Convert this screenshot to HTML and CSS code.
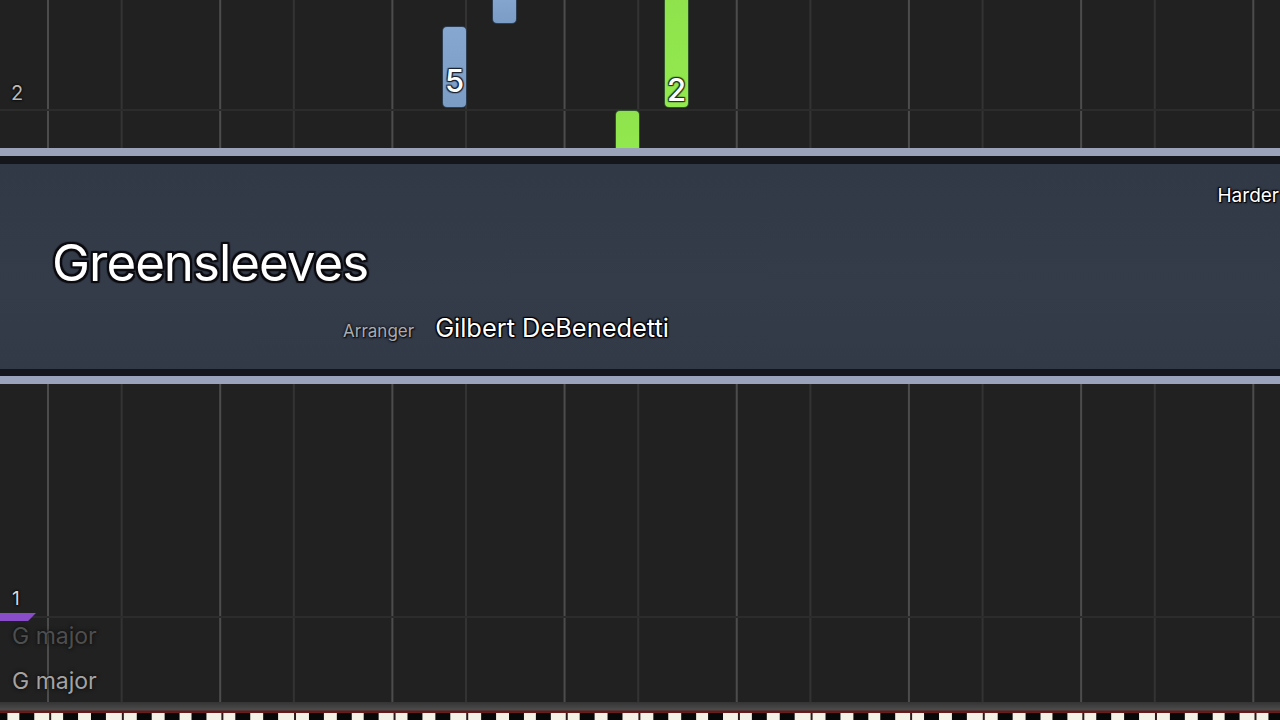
FILE: index.html
```html
<!DOCTYPE html>
<html lang="en">
<head>
<meta charset="utf-8">
<title>Greensleeves</title>
<link rel="stylesheet" href="styles.css">
</head>
<body>
<div class="app">
  <section class="roll roll-top">
    <span class="measure measure-2">2</span>
    <div class="note note-blue note-a"><span class="finger">5</span></div>
    <div class="note note-blue note-b"></div>
    <div class="note note-green note-c"><span class="finger">2</span></div>
    <div class="note note-green note-d"></div>
  </section>
  <div class="rail rail-top"></div>
  <section class="banner">
    <div class="banner-top"><span class="difficulty">Harder</span></div>
    <h1 class="title">Greensleeves</h1>
    <div class="credits">
      <span class="credit-label">Arranger</span>
      <span class="credit-name">Gilbert DeBenedetti</span>
    </div>
  </section>
  <div class="rail rail-bottom"></div>
  <section class="roll roll-bottom">
    <span class="measure-num">1</span>
    <div class="key-marker"></div>
    <span class="key-sig key-sig-dim">G major</span>
    <span class="key-sig key-sig-lit">G major</span>
  </section>
  <div class="keybed"></div>
  <div class="keys"></div>
</div>
</body>
</html>
```

FILE: styles.css
```css
* { box-sizing: border-box; margin: 0; padding: 0; }
html, body { width: 1280px; height: 720px; overflow: hidden; background: #212121; }
body { font-family: Inter, "Noto Sans", "Liberation Sans", sans-serif; }

.app { display: flex; flex-direction: column; width: 1280px; height: 720px; }

.roll {
  position: relative;
  overflow: hidden;
  background-color: #212121;
  background-image:
    repeating-linear-gradient(90deg, #4c4c4c 0 2px, transparent 2px 74px, #333 74px 76px, transparent 76px 172.2px);
  background-size: 172.2px 100%;
  background-position: 47px 0;
}
.roll-top { height: 148px; flex: none; }
.roll-top::before, .roll-bottom::before {
  content: ""; position: absolute; left: 0; right: 0; height: 2px; background: #2c2c2c;
}
.roll-top::before { top: 109px; }
.roll-bottom::before { top: 232px; }

.measure {
  position: absolute; left: 11px; top: 81px;
  font-size: 20px; line-height: 24px; color: #b9b9b9;
  text-shadow: 0 0 2px #000, 0 0 3px #000;
}

.note {
  position: absolute; width: 25px; border-radius: 5px;
  border: 1px solid rgba(10, 20, 30, 0.7);
  display: flex; justify-content: center; align-items: flex-end;
}
.note-blue { background: linear-gradient(180deg, #86a8d0, #7a9cc5); }
.note-green { background: linear-gradient(180deg, #8fe24c, #92ea4e); }
.note-a { left: 442px; top: 26px; height: 82px; padding-bottom: 10px; }
.note-b { left: 492px; top: -6px; height: 30px; }
.note-c { left: 664px; top: -6px; height: 114px; padding-bottom: 1px; }
.note-d { left: 615px; top: 110px; height: 46px; }
.finger {
  font-size: 31px; line-height: 32px; font-weight: 500; color: #fff;
  text-shadow: 0 0 2px #1a2230, 1px 1px 1px #1a2230, -1px -1px 1px #1a2230, 1px -1px 1px #1a2230, -1px 1px 1px #1a2230;
}
.note-green .finger { text-shadow: 0 0 2px #223318, 1px 1px 1px #223318, -1px -1px 1px #223318, 1px -1px 1px #223318, -1px 1px 1px #223318; }

.rail { flex: none; }
.rail-top { height: 16px; background: linear-gradient(180deg, #9aa3b9 0 8px, #15151c 8px 16px); }
.rail-bottom { height: 15px; background: linear-gradient(180deg, #15151c 0 7px, #9aa3b9 7px 15px); }

.banner {
  flex: none; height: 205px; overflow: hidden;
  background: linear-gradient(180deg, #313846, #343b49 60%, #323947);
  padding: 20px 0 0 52px;
  display: flex; flex-direction: column;
}
.banner-top { display: flex; justify-content: flex-end; margin-right: 1px; height: 24px; }
.difficulty {
  font-size: 19px; line-height: 24px; color: #fff;
  text-shadow: 0 0 2px #000, 0 0 3px #000, 1px 1px 1px #000, -1px -1px 1px #000;
}
.title {
  margin-top: 28px; font-size: 51px; line-height: 54px; font-weight: 400; color: #fff;
  letter-spacing: -1px;
  text-shadow: 0 0 2px #0c0c10, 2px 2px 1px #0c0c10, -2px -2px 1px #0c0c10, 2px -2px 1px #0c0c10, -2px 2px 1px #0c0c10, 0 2px 1px #0c0c10, 0 -2px 1px #0c0c10, 2px 0 1px #0c0c10, -2px 0 1px #0c0c10;
}
.credits {
  margin-top: 23px; padding-left: 291px;
  display: flex; align-items: baseline; gap: 21px; line-height: 30px;
}
.credit-label {
  font-size: 17px; color: #a9abb2;
  text-shadow: 0 0 2px #111, 0 0 3px #111, 1px 1px 1px #111;
}
.credit-name {
  font-size: 25.4px; color: #fff;
  text-shadow: 0 0 2px #000, 1px 1px 1px #000, -1px -1px 1px #000, 1px -1px 1px #000, -1px 1px 1px #000;
}

.roll-bottom {
  flex: none; height: 318px;
  display: flex; flex-direction: column; justify-content: flex-end; align-items: flex-start;
  padding: 0 0 7px 12px;
}
.measure-num {
  font-size: 19px; line-height: 22px; color: #d8d8d8;
  text-shadow: 0 0 2px #000, 0 0 3px #000;
}
.key-marker {
  width: 36px; height: 8px; margin: 3px 0 1px -12px;
  background: #8a4dc9;
  clip-path: polygon(0 0, 100% 0, 78% 100%, 0 100%);
}
.key-sig {
  font-size: 23px; line-height: 28px;
  text-shadow: 0 0 2px #111, 0 0 4px #111;
}
.key-sig-dim { color: #4e4e4e; }
.key-sig-lit { color: #a3a3a3; margin-top: 17px; }

.keybed {
  flex: none; height: 11px;
  background: linear-gradient(180deg, #343434 0, #4c4c4c 8px, #5c1a1a 9px, #6b1c1c 11px);
}
.keys {
  flex: none; height: 7px;
  background-color: #f4f1e6;
  background-image:
    linear-gradient(90deg,
      #2a1a1a 0 1.5px, transparent 1.5px 14px,
      #080808 14px 29px, transparent 29px 42px,
      #080808 42px 57px, transparent 57px 73px,
      #2a1a1a 73px 74.5px, transparent 74.5px 88px,
      #080808 88px 103px, transparent 103px 115px,
      #080808 115px 130px, transparent 130px 142px,
      #080808 142px 157px, transparent 157px 172.2px);
  background-size: 172.2px 100%;
  background-position: 49.2px 0;
}
```
